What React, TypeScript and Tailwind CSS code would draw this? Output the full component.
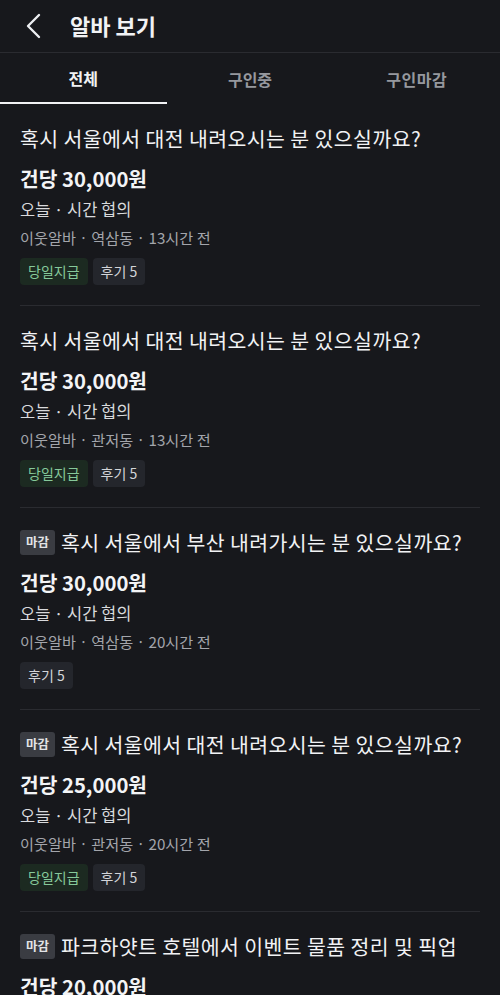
import React from "react";

type Job = {
  closed?: boolean;
  title: string;
  price: string;
  place: string;
  time: string;
  sameDay: boolean;
};

const jobs: Job[] = [
  { title: "혹시 서울에서 대전 내려오시는 분 있으실까요?", price: "건당 30,000원", place: "역삼동", time: "13시간 전", sameDay: true },
  { title: "혹시 서울에서 대전 내려오시는 분 있으실까요?", price: "건당 30,000원", place: "관저동", time: "13시간 전", sameDay: true },
  { closed: true, title: "혹시 서울에서 부산 내려가시는 분 있으실까요?", price: "건당 30,000원", place: "역삼동", time: "20시간 전", sameDay: false },
  { closed: true, title: "혹시 서울에서 대전 내려오시는 분 있으실까요?", price: "건당 25,000원", place: "관저동", time: "20시간 전", sameDay: true },
  { closed: true, title: "파크하얏트 호텔에서 이벤트 물품 정리 및 픽업", price: "건당 20,000원", place: "역삼동", time: "1일 전", sameDay: true },
];

function Card({ job, last }: { job: Job; last: boolean }) {
  return (
    <div className="px-5">
      <div className={"pt-5 pb-5 " + (last ? "" : "border-b border-[#2a2b30]")}>
        <div className="flex items-center h-[28px]">
          {job.closed && (
            <span className="mr-[6px] flex items-center justify-center h-[25px] w-[35px] rounded-[3px] bg-[#3a3c42] text-[12.5px] font-bold text-[#e2e3e6]">
              마감
            </span>
          )}
          <span className="text-[20.5px] leading-[28px] text-[#f1f2f4] tracking-[0.4px] whitespace-nowrap">{job.title}</span>
        </div>
        <div className="mt-[13px] text-[20.3px] leading-[26px] font-bold text-[#f3f4f6]">{job.price}</div>
        <div className="mt-[6px] text-[16.5px] leading-[24px] text-[#d9dadd]">오늘 · 시간 협의</div>
        <div className="mt-[6px] text-[15.2px] leading-[20px] text-[#a3a5ab]">
          이웃알바 · {job.place} · {job.time}
        </div>
        <div className="mt-[11px] flex gap-[5px]">
          {job.sameDay && (
            <span className="h-[27px] px-[8px] flex items-center rounded-[4px] bg-[#1c2a21] text-[14px] text-[#86c99a]">
              당일지급
            </span>
          )}
          <span className="h-[27px] px-[8px] flex items-center rounded-[4px] bg-[#24262c] text-[14px] text-[#d3d5d9]">
            후기 5
          </span>
        </div>
      </div>
    </div>
  );
}

export default function App() {
  return (
    <div
      className="w-[500px] h-[995px] overflow-hidden bg-[#17181c]"
      style={{ fontFamily: '"Noto Sans CJK KR", "Noto Sans", sans-serif' }}
    >
      <div className="h-[53px] flex items-center border-b border-[#2a2b30]">
        <div className="w-[70px] flex items-center pl-[25px]">
          <svg width="18" height="26" viewBox="0 0 18 26" fill="none">
            <path d="M14 2 L3 13 L14 24" stroke="#eceef1" strokeWidth="2.4" strokeLinecap="round" strokeLinejoin="round" />
          </svg>
        </div>
        <div className="text-[22px] font-bold text-[#f1f2f4] -mt-[2px]">알바 보기</div>
      </div>
      <div className="grid grid-cols-3 h-[51px]">
        <div className="flex items-center justify-center border-b-2 border-[#f1f2f4] text-[16px] font-bold text-[#f1f2f4] pt-[1px]">
          전체
        </div>
        <div className="flex items-center justify-center text-[16px] font-bold text-[#96989e] pt-[1px]">구인중</div>
        <div className="flex items-center justify-center text-[16px] font-bold text-[#96989e] pt-[1px] tracking-[0.5px]">구인마감</div>
      </div>
      {jobs.map((j, i) => (
        <Card key={i} job={j} last={i === jobs.length - 1} />
      ))}
    </div>
  );
}
